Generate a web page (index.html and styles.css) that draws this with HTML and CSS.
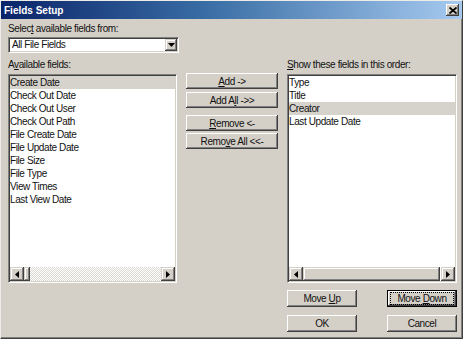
FILE: index.html
```html
<!DOCTYPE html>
<html lang="en">
<head>
    <meta charset="UTF-8">
    <title>Fields Setup</title>
    <link rel="stylesheet" href="styles.css">
</head>
<body>
    <div class="window">
        <div class="titlebar">
            <span class="title">Fields Setup</span>
            <span class="close-btn">
                <svg width="8" height="7" viewBox="0 0 8 7"><path d="M0.5 0.5L7.5 6.5M7.5 0.5L0.5 6.5" stroke="#000" stroke-width="1.7"/></svg>
            </span>
        </div>

        <div class="content">
            <div class="label">Selec<u>t</u> available fields from:</div>
            <div class="combo">
                <span class="combo-text">All File Fields</span>
                <span class="combo-btn raised">
                    <svg width="7" height="4" viewBox="0 0 7 4"><path d="M0 0h7L3.5 4z"/></svg>
                </span>
            </div>

            <div class="columns">
                <!-- left list -->
                <div class="col col-left">
                    <div class="label list-label">A<u>v</u>ailable fields:</div>
                    <div class="listbox">
                        <ul class="items">
                            <li class="selected">Create Date</li>
                            <li>Check Out Date</li>
                            <li>Check Out User</li>
                            <li>Check Out Path</li>
                            <li>File Create Date</li>
                            <li>File Update Date</li>
                            <li>File Size</li>
                            <li>File Type</li>
                            <li>View Times</li>
                            <li>Last View Date</li>
                        </ul>
                        <div class="hscroll">
                            <span class="sb-btn raised">
                                <svg width="4" height="7" viewBox="0 0 4 7"><path d="M4 0v7L0 3.5z"/></svg>
                            </span>
                            <span class="sb-thumb raised thumb-small"></span>
                            <span class="sb-track"></span>
                            <span class="sb-btn raised">
                                <svg width="4" height="7" viewBox="0 0 4 7"><path d="M0 0v7L4 3.5z"/></svg>
                            </span>
                        </div>
                    </div>
                </div>

                <!-- move buttons -->
                <div class="col col-mid">
                    <div class="btn"><span><u>A</u>dd -&gt;</span></div>
                    <div class="btn"><span>Add A<u>l</u>l -&gt;&gt;</span></div>
                    <div class="btn btn-gap"><span><u>R</u>emove &lt;-</span></div>
                    <div class="btn btn-tight"><span>Remo<u>v</u>e All &lt;&lt;-</span></div>
                </div>

                <!-- right list -->
                <div class="col col-right">
                    <div class="label list-label"><u>S</u>how these fields in this order:</div>
                    <div class="listbox">
                        <ul class="items">
                            <li>Type</li>
                            <li>Title</li>
                            <li class="selected">Creator</li>
                            <li>Last Update Date</li>
                        </ul>
                        <div class="hscroll">
                            <span class="sb-btn raised">
                                <svg width="4" height="7" viewBox="0 0 4 7"><path d="M4 0v7L0 3.5z"/></svg>
                            </span>
                            <span class="sb-thumb raised thumb-long"></span>
                            <span class="sb-btn raised">
                                <svg width="4" height="7" viewBox="0 0 4 7"><path d="M0 0v7L4 3.5z"/></svg>
                            </span>
                        </div>
                    </div>

                    <div class="btn-row">
                        <div class="btn btn-small"><span>Move <u>U</u>p</span></div>
                        <div class="btn btn-small btn-default"><span class="focus"><span>Move <u>D</u>own</span></span></div>
                    </div>
                    <div class="btn-row btn-row-last">
                        <div class="btn btn-small"><span>OK</span></div>
                        <div class="btn btn-small"><span>Cancel</span></div>
                    </div>
                </div>
            </div>
        </div>
    </div>
</body>
</html>
```

FILE: styles.css
```css
:root {
    --face: #d4d0c8;
    --light: #ffffff;
    --shadow: #808080;
    --dark: #404040;
}

* {
    margin: 0;
    padding: 0;
    box-sizing: border-box;
}

body {
    font-family: "Liberation Sans", Arial, sans-serif;
    font-size: 10px;
    letter-spacing: -0.4px;
    color: #111;
    background: var(--face);
}

u {
    text-decoration: underline;
    text-underline-offset: 1px;
}

.window {
    width: 463px;
    height: 339px;
    background: var(--face);
    border: 1px solid;
    border-color: #eeece8 var(--dark) var(--dark) #eeece8;
    box-shadow: inset -1px -1px var(--shadow);
}

.titlebar {
    height: 18px;
    display: flex;
    align-items: center;
    justify-content: space-between;
    padding: 0 3px 0 3px;
    background: linear-gradient(90deg, #0a246a, #3a6ea5 45%, #a6caf0);
    color: #fff;
}

.title {
    font-weight: bold;
    letter-spacing: 0;
}

.close-btn {
    width: 13px;
    height: 12px;
    display: flex;
    align-items: center;
    justify-content: center;
    background: var(--face);
    box-shadow: inset -1px -1px var(--dark), inset 1px 1px var(--light), inset -2px -2px var(--shadow);
}

.content {
    padding: 4px 5px 0 7px;
}

.label {
    height: 12px;
    line-height: 12px;
    white-space: nowrap;
}

/* combo box */
.combo {
    margin-top: 2px;
    width: 171px;
    height: 16px;
    display: flex;
    align-items: center;
    background: #fff;
    border: 1px solid;
    border-color: var(--shadow) var(--light) var(--light) var(--shadow);
    box-shadow: inset 1px 1px var(--dark), inset -1px -1px var(--face);
    padding: 1px;
}

.combo-text {
    flex: 1;
    padding-left: 2px;
    line-height: 12px;
}

.combo-btn {
    width: 12px;
    height: 12px;
    display: flex;
    align-items: center;
    justify-content: center;
}

.raised {
    background: var(--face);
    box-shadow: inset -1px -1px var(--dark), inset 1px 1px var(--face), inset -2px -2px var(--shadow), inset 2px 2px var(--light);
}

/* columns */
.columns {
    display: flex;
    margin-top: 6px;
}

.col-left {
    width: 169px;
}

.col-mid {
    width: 92px;
    margin-left: 9px;
    padding-top: 14px;
}

.col-right {
    width: 170px;
    margin-left: 9px;
}

.list-label {
    margin-bottom: 3px;
}

.listbox {
    height: 209px;
    display: flex;
    flex-direction: column;
    background: #fff;
    border: 1px solid;
    border-color: var(--shadow) var(--light) var(--light) var(--shadow);
    box-shadow: inset 1px 1px var(--dark), inset -1px -1px var(--face);
    padding: 1px;
}

.items {
    flex: 1;
    list-style: none;
}

.items li {
    height: 13px;
    line-height: 13px;
    white-space: nowrap;
}

.items li.selected {
    background: #d6d3cd;
}

/* scroll bar */
.hscroll {
    height: 14px;
    display: flex;
}

.sb-btn {
    width: 14px;
    height: 14px;
    display: flex;
    align-items: center;
    justify-content: center;
}

.sb-thumb {
    height: 14px;
}

.thumb-small {
    width: 6px;
}

.thumb-long {
    flex: 1;
    margin-right: 1px;
}

.sb-track {
    flex: 1;
    background: repeating-conic-gradient(#ffffff 0 25%, #dcd9d3 0 50%) 0 0 / 2px 2px;
}

/* push buttons */
.btn {
    height: 16px;
    display: flex;
    align-items: center;
    justify-content: center;
    white-space: nowrap;
    background: var(--face);
    box-shadow: inset -1px -1px var(--dark), inset 1px 1px var(--light), inset -2px -2px var(--shadow);
    margin-bottom: 3px;
}

.btn-gap {
    margin-top: 7px;
}

.btn-tight {
    margin-top: -1px;
}

.btn-row {
    display: flex;
    justify-content: space-between;
    margin-top: 7px;
}

.btn-row-last {
    margin-top: 8px;
}

.btn-small {
    width: 70px;
    height: 17px;
    margin-bottom: 0;
}

.btn-default {
    border: 1px solid #000;
}

.focus {
    display: flex;
    align-items: center;
    justify-content: center;
    width: 62px;
    height: 11px;
    outline: 1px dotted #000;
}
```
